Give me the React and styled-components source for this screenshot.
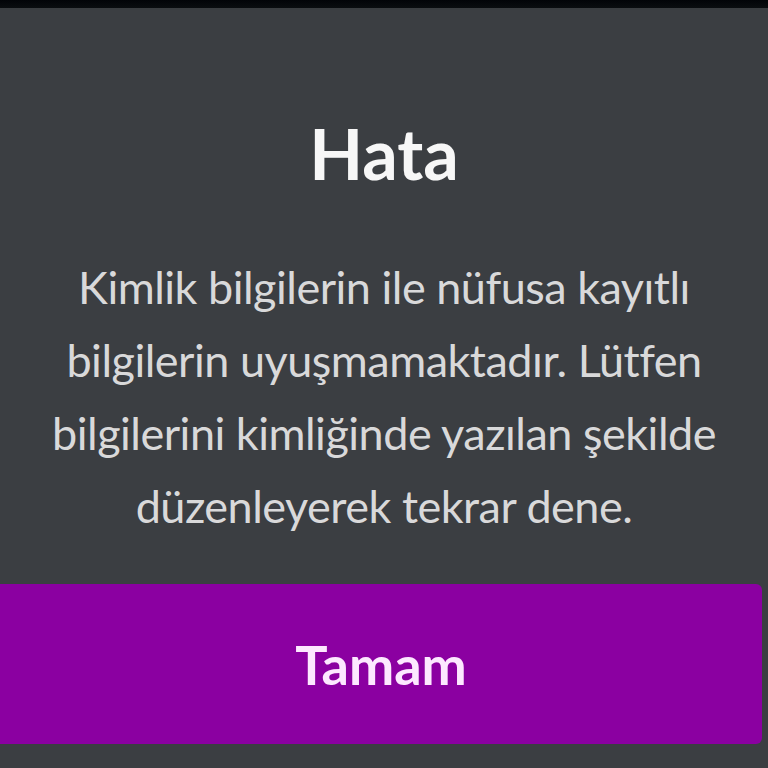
import styled, { createGlobalStyle } from "styled-components";

const Global = createGlobalStyle`
  html, body {
    margin: 0;
    padding: 0;
    background: #3b3e42;
  }
`;

const Screen = styled.main`
  width: 768px;
  height: 768px;
  overflow: hidden;
  display: flex;
  flex-direction: column;
  background: #3b3e42;
  font-family: Lato, "Open Sans", sans-serif;
`;

const StatusBar = styled.div`
  height: 8px;
  background: linear-gradient(#020408, #0a0d10);
  flex-shrink: 0;
`;

const Dialog = styled.section`
  flex: 1;
  display: flex;
  flex-direction: column;
  align-items: center;
`;

const Title = styled.h1`
  margin: 103px 0 0;
  font-size: 70px;
  line-height: 84px;
  font-weight: 700;
  color: #f7f7f7;
`;

const Message = styled.p`
  margin: 56px 0 0;
  font-size: 45px;
  line-height: 73px;
  letter-spacing: -0.5px;
  text-align: center;
  white-space: nowrap;
  color: #d9d9da;
`;

const Button = styled.button`
  margin-top: 41px;
  align-self: stretch;
  margin-right: 6px;
  height: 160px;
  border: none;
  border-radius: 0 6px 6px 0;
  background: #8b00a1;
  color: #fde8ff;
  font-family: inherit;
  font-size: 54px;
  font-weight: 700;
  cursor: pointer;
`;

export default function App() {
  return (
    <>
      <Global />
      <Screen>
        <StatusBar />
        <Dialog>
          <Title>Hata</Title>
          <Message>
            Kimlik bilgilerin ile nüfusa kayıtlı
            <br />
            bilgilerin uyuşmamaktadır. Lütfen
            <br />
            bilgilerini kimliğinde yazılan şekilde
            <br />
            düzenleyerek tekrar dene.
          </Message>
          <Button>Tamam</Button>
        </Dialog>
      </Screen>
    </>
  );
}
